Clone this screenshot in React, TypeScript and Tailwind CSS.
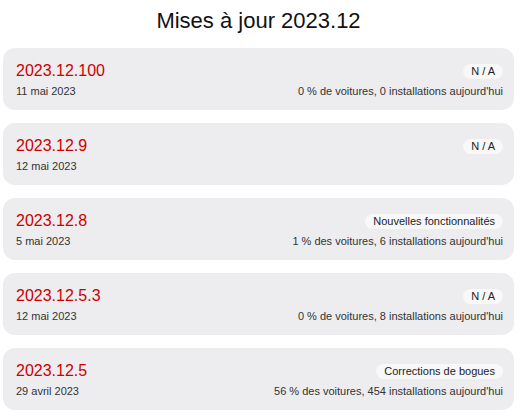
import React from "react"

type Release = {
  version: string
  date: string
  tag: string
  stats: string
}

const releases: Release[] = [
  { version: "2023.12.100", date: "11 mai 2023", tag: "N / A", stats: "0 % de voitures, 0 installations aujourd'hui" },
  { version: "2023.12.9", date: "12 mai 2023", tag: "N / A", stats: "" },
  { version: "2023.12.8", date: "5 mai 2023", tag: "Nouvelles fonctionnalités", stats: "1 % des voitures, 6 installations aujourd'hui" },
  { version: "2023.12.5.3", date: "12 mai 2023", tag: "N / A", stats: "0 % de voitures, 8 installations aujourd'hui" },
  { version: "2023.12.5", date: "29 avril 2023", tag: "Corrections de bogues", stats: "56 % des voitures, 454 installations aujourd'hui" },
]

function ReleaseCard({ release }: { release: Release }) {
  return (
    <div className="rounded-xl bg-[#ededef] px-[13px] pr-[11px] py-[11px]">
      <div className="flex h-[24px] items-center justify-between">
        <span className="text-[16px] leading-[24px] text-[#cc0000]">{release.version}</span>
        <span className="rounded-full bg-[#f8f8f9] px-[8px] text-[11px] leading-[15px] text-[#222]">{release.tag}</span>
      </div>
      <div className="flex h-[16px] items-center justify-between text-[11px] leading-[16px] text-[#333]">
        <span>{release.date}</span>
        <span>{release.stats}</span>
      </div>
    </div>
  )
}

export default function App() {
  return (
    <div className="min-h-[416px] w-[522px] bg-white pl-[3px] pr-[8px] font-['Liberation_Sans',Arial,sans-serif]">
      <h1 className="pt-[7px] text-center text-[22px] leading-[28px] text-[#111] mb-[13px]">Mises à jour 2023.12</h1>
      <div className="flex flex-col gap-[13px]">
        {releases.map((r) => (
          <ReleaseCard key={r.version} release={r} />
        ))}
      </div>
    </div>
  )
}
